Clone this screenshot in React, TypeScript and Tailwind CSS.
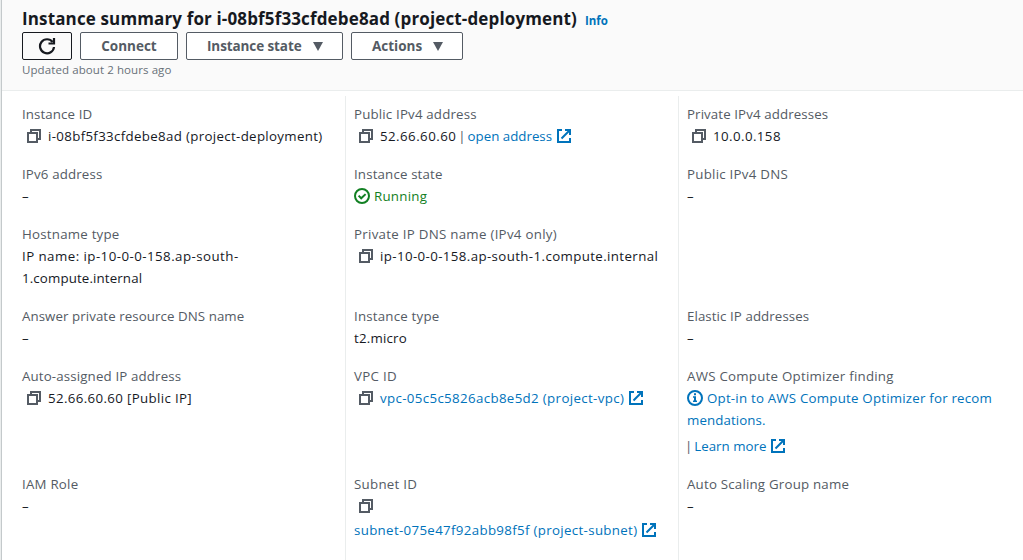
import type { ReactNode } from "react";

function CopyIcon() {
  return (
    <svg className="ml-[5px] mr-[7px] block size-[14px] shrink-0" viewBox="0 0 14 14" fill="none" stroke="#545b64" strokeWidth="2">
      <path d="M1 4h9v9H1z" />
      <path d="M4 3.5V1h9v9h-2.5" />
    </svg>
  );
}

function ExternalIcon() {
  return (
    <svg className="ml-[5px] block size-[14px] shrink-0" viewBox="0 0 14 14" fill="none" stroke="#0073bb" strokeWidth="2">
      <path d="M5 1H1v12h12V9" />
      <path d="M8 1h5v5M12.7 1.3 4.5 9.5" />
    </svg>
  );
}

function CheckIcon() {
  return (
    <svg className="mr-1 block size-4 shrink-0" viewBox="0 0 16 16" fill="none" stroke="#128023" strokeWidth="2">
      <circle cx="8" cy="8" r="7" />
      <path d="m4.6 7.6 2.6 2.7 4.4-4.2" />
    </svg>
  );
}

function InfoIcon() {
  return (
    <svg className="mr-1 block size-4 shrink-0" viewBox="0 0 16 16" fill="none" stroke="#0073bb" strokeWidth="2">
      <circle cx="8" cy="8" r="7" />
      <path d="M7 3.2h2v2H7zM6 6.2h3v4.3h1V12H6v-1.5h1V7.7H6z" fill="#0073bb" stroke="none" />
    </svg>
  );
}

function RefreshIcon() {
  return (
    <svg className="block size-[18px]" viewBox="0 0 18 18" fill="none" stroke="#16191f" strokeWidth="2.2">
      <path d="M16 10A7 7 0 1 1 14.6 5" />
      <path d="M16 1v5.5h-5.5" />
    </svg>
  );
}

function Caret() {
  return (
    <svg className="block h-[9px] w-[10px]" viewBox="0 0 10 9">
      <path d="M0 0h10L5 9z" fill="#545b64" />
    </svg>
  );
}

function Field({ label, labelClass = "", children }: { label: string; labelClass?: string; children: ReactNode }) {
  return (
    <div>
      <div className="flex h-[22px] text-[#545b64]">
        <span className={labelClass}>{label}</span>
      </div>
      {children}
    </div>
  );
}

function Row({ children }: { children: ReactNode }) {
  return <div className="flex h-[22px] items-center">{children}</div>;
}

const button = "flex h-7 items-center rounded-[2px] border text-[13.5px] font-bold";

export default function App() {
  return (
    <div className="h-[560px] w-[1023px] overflow-hidden bg-[#eaeded] pl-px font-['Open_Sans',sans-serif] text-[13.3px] leading-[22px] whitespace-nowrap text-[#16191f]">
      <div className="flex h-full flex-col border-l border-[#c4c9cb] bg-white">
        <header className="h-[91px] border-b border-[#eaeded] bg-[#fafafa] pl-5 pt-[7px]">
          <div className="flex h-[25px] items-start">
            <h1 className="text-[17px] leading-6 font-bold tracking-[0.14px]">Instance summary for i-08bf5f33cfdebe8ad (project-deployment)</h1>
            <a className="ml-2 pt-[3px] text-[11.5px] font-bold text-[#0073bb]">Info</a>
          </div>
          <div className="flex gap-2 text-[#545b64]">
            <button className={`${button} w-[50px] justify-center border-[#16191f] bg-[#fafafa]`}><RefreshIcon /></button>
            <button className={`${button} w-[98px] justify-center border-[#545b64] bg-white`}>Connect</button>
            <button className={`${button} w-[157px] justify-between border-[#545b64] bg-white pl-5 pr-[19px]`}><span className="tracking-[-0.1px]">Instance state</span><Caret /></button>
            <button className={`${button} w-[112px] justify-between border-[#545b64] bg-white pl-5 pr-[19px]`}>Actions<Caret /></button>
          </div>
          <div className="text-[11.5px] leading-5 tracking-[0.09px] text-[#687078]"><span>Updated about 2 hours ago</span></div>
        </header>
        <main className="grid flex-1 grid-cols-[343px_333px_1fr] pt-[5px]">
          <section className="grid grid-rows-[44px_44px_66px_44px_92px_66px] content-start gap-y-4 pl-5 pt-[7px]">
            <Field label="Instance ID" labelClass="tracking-[0.1px]"><Row><CopyIcon /><span className="tracking-[0.33px]">i-08bf5f33cfdebe8ad (project-deployment)</span></Row></Field>
            <Field label="IPv6 address" labelClass="tracking-[0.15px]"><Row>–</Row></Field>
            <Field label="Hostname type" labelClass="tracking-[0.22px]">
              <Row><span className="tracking-[0.45px]">IP name: ip-10-0-0-158.ap-south-</span></Row>
              <Row><span className="tracking-[0.13px]">1.compute.internal</span></Row>
            </Field>
            <Field label="Answer private resource DNS name" labelClass="tracking-[0.07px]"><Row>–</Row></Field>
            <Field label="Auto-assigned IP address" labelClass="tracking-[0.14px]"><Row><CopyIcon /><span className="tracking-[0.35px]">52.66.60.60 [Public IP]</span></Row></Field>
            <Field label="IAM Role" labelClass="tracking-[0.22px]"><Row>–</Row></Field>
          </section>
          <section className="grid grid-rows-[44px_44px_66px_44px_92px_66px] content-start gap-y-4 border-l border-[#eaeded] pl-2 pt-[7px]">
            <Field label="Public IPv4 address" labelClass="tracking-[0.17px]">
              <Row><CopyIcon /><span className="tracking-[0.45px]">52.66.60.60</span><span className="ml-[2px] mr-[2px] text-[#545b64]">|</span><a className="text-[#0073bb]">open address</a><ExternalIcon /></Row>
            </Field>
            <Field label="Instance state" labelClass="tracking-[0.15px]"><Row><CheckIcon /><span className="tracking-[0.25px] text-[#128023]">Running</span></Row></Field>
            <Field label="Private IP DNS name (IPv4 only)" labelClass="tracking-[0.28px]"><Row><CopyIcon /><span className="tracking-[0.38px]">ip-10-0-0-158.ap-south-1.compute.internal</span></Row></Field>
            <Field label="Instance type" labelClass="tracking-[0.2px]"><Row><span className="tracking-[0.2px]">t2.micro</span></Row></Field>
            <Field label="VPC ID" labelClass="tracking-[0.3px]"><Row><CopyIcon /><a className="tracking-[0.35px] text-[#0073bb]">vpc-05c5c5826acb8e5d2 (project-vpc)</a><ExternalIcon /></Row></Field>
            <Field label="Subnet ID" labelClass="tracking-[0.28px]">
              <Row><CopyIcon /></Row>
              <div className="flex h-[26px] items-center"><a className="tracking-[0.33px] text-[#0073bb]">subnet-075e47f92abb98f5f (project-subnet)</a><ExternalIcon /></div>
            </Field>
          </section>
          <section className="grid grid-rows-[44px_44px_66px_44px_92px_66px] content-start gap-y-4 border-l border-[#eaeded] pl-2 pt-[7px]">
            <Field label="Private IPv4 addresses" labelClass="tracking-[0.1px]"><Row><CopyIcon /><span className="tracking-[0.42px]">10.0.0.158</span></Row></Field>
            <Field label="Public IPv4 DNS" labelClass="tracking-[0.25px]"><Row>–</Row></Field>
            <div />
            <Field label="Elastic IP addresses" labelClass="tracking-[0.08px]"><Row>–</Row></Field>
            <Field label="AWS Compute Optimizer finding" labelClass="tracking-[0.24px]">
              <Row><InfoIcon /><a className="tracking-[0.21px] text-[#0073bb]">Opt-in to AWS Compute Optimizer for recom</a></Row>
              <Row><a className="tracking-[0.1px] text-[#0073bb]">mendations.</a></Row>
              <div className="flex h-[30px] items-center"><span className="-ml-[2px] mr-[2px] text-[#545b64]">|</span><a className="text-[#0073bb]">Learn more</a><ExternalIcon /></div>
            </Field>
            <Field label="Auto Scaling Group name" labelClass="tracking-[0.2px]"><Row>–</Row></Field>
          </section>
        </main>
      </div>
    </div>
  );
}
